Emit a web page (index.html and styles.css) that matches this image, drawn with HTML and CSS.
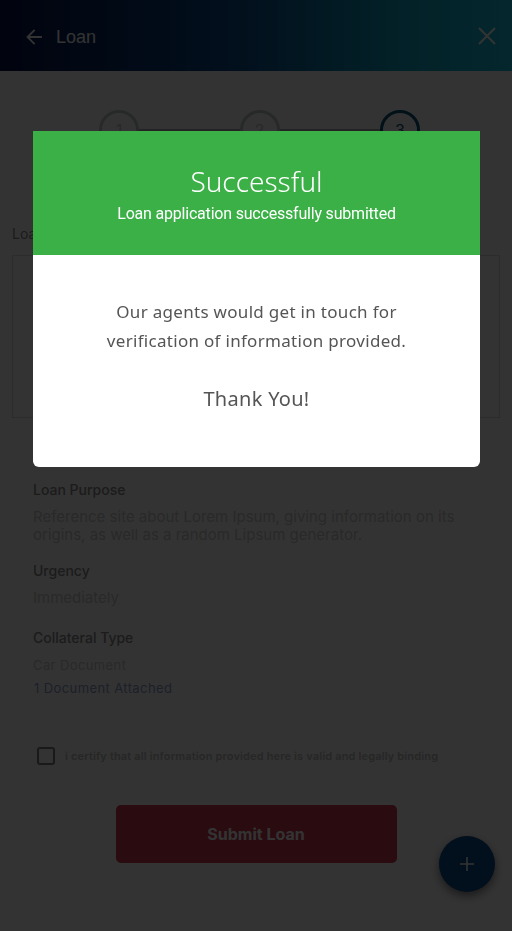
FILE: index.html
```html
<!DOCTYPE html>
<html lang="en">
<head>
<meta charset="utf-8">
<title>Loan</title>
<link rel="stylesheet" href="styles.css">
</head>
<body>
<div class="app">
  <header class="topbar">
    <svg class="icon-back" viewBox="0 0 16 16" width="16" height="16" aria-hidden="true">
      <path d="M15 8H2 M8 1.5 1.5 8 8 14.5" fill="none" stroke="#fff" stroke-width="1.8" stroke-linecap="square"/>
    </svg>
    <span class="title">Loan</span>
    <svg class="icon-close" viewBox="0 0 18 18" width="18" height="18" aria-hidden="true">
      <path d="M1 1 17 17 M17 1 1 17" fill="none" stroke="#fff" stroke-width="2"/>
    </svg>
  </header>

  <div class="stepper">
    <span class="circle done">1</span>
    <span class="step-line"></span>
    <span class="circle done">2</span>
    <span class="step-line"></span>
    <span class="circle active">3</span>
  </div>

  <div class="section-title">Loan Summary</div>
  <div class="summary-box">
    <div class="sum-row"><span>Amount</span><span>₦500,000</span></div>
    <div class="sum-row"><span>Tenure</span><span>6 Months</span></div>
    <div class="sum-row"><span>Rate</span><span>5%</span></div>
    <div class="sum-row"><span>Monthly</span><span>₦87,500</span></div>
  </div>

  <div class="details">
    <div class="field">
      <div class="label">Loan Purpose</div>
      <div class="value">Reference site about Lorem Ipsum, giving information on its origins, as well as a random Lipsum generator.</div>
    </div>
    <div class="field">
      <div class="label">Urgency</div>
      <div class="value">Immediately</div>
    </div>
    <div class="field collateral">
      <div class="label">Collateral Type</div>
      <div class="value small">Car Document</div>
      <div class="value small link">1 Document Attached</div>
    </div>
  </div>

  <label class="certify">
    <span class="checkbox"></span>
    <span class="certify-text">i certify that all information provided here is valid and legally binding</span>
  </label>

  <div class="actions">
    <button class="submit" type="button">Submit Loan</button>
  </div>

  <button class="fab" type="button" aria-label="Add">
    <svg viewBox="0 0 16 16" width="16" height="16" aria-hidden="true">
      <path d="M8 1V15 M1 8H15" fill="none" stroke="#fff" stroke-width="1.6"/>
    </svg>
  </button>
</div>

<div class="overlay">
  <div class="modal">
    <div class="modal-head">
      <div class="modal-title">Successful</div>
      <div class="modal-sub">Loan application successfully submitted</div>
    </div>
    <div class="modal-body">
      <p class="modal-msg">Our agents would get in touch for<br>verification of information provided.</p>
      <p class="modal-thanks">Thank You!</p>
    </div>
  </div>
</div>
</body>
</html>
```

FILE: styles.css
```css
* { box-sizing: border-box; }

html, body {
  margin: 0;
  padding: 0;
  width: 512px;
  height: 931px;
  overflow: hidden;
  background: #ffffff;
  font-family: "Inter", "Noto Sans", sans-serif;
}

.app {
  position: relative;
  width: 512px;
  height: 931px;
  display: flex;
  flex-direction: column;
}

.topbar {
  height: 71px;
  flex: none;
  display: flex;
  align-items: center;
  padding: 0 16px 0 26px;
  background: linear-gradient(90deg, #06134a 0%, #0a4a8a 45%, #10a8c8 80%, #14c0dc 100%);
  color: #fff;
}

.icon-back { display: block; margin-top: 2px; }

.title {
  margin-left: 14px;
  font-family: "Liberation Sans", sans-serif;
  font-size: 18px;
  line-height: 22px;
  margin-top: 2px;
  flex: 1;
}

.icon-close { display: block; }

.stepper {
  margin: 39px 0 0 99px;
  width: 321px;
  display: flex;
  align-items: center;
}

.circle {
  width: 40px;
  height: 40px;
  flex: none;
  border-radius: 50%;
  border: 3px solid #c4cbcb;
  display: flex;
  align-items: center;
  justify-content: center;
  font-size: 16px;
  color: #c8c8c8;
}

.circle.active {
  border-color: #0a5078;
  color: #0a5078;
}

.step-line {
  flex: 1;
  height: 3px;
  background: #b0b0b0;
}

.section-title {
  margin: 75px 0 0 12px;
  font-size: 14px;
  line-height: 18px;
  color: #8c8c8c;
}

.summary-box {
  margin: 12px 12px 0 12px;
  height: 163px;
  border: 1px solid #dcdcdc;
  padding: 18px 19px 0 30px;
  display: flex;
  flex-direction: column;
  gap: 17px;
}

.sum-row {
  display: flex;
  justify-content: space-between;
  font-size: 14px;
  line-height: 18px;
  color: #a0a0a0;
}

.details {
  margin-top: 63px;
  padding: 0 33px;
  display: flex;
  flex-direction: column;
  gap: 18px;
}

.field { display: flex; flex-direction: column; }

.field.collateral { margin-top: 4px; }

.label {
  font-size: 14px;
  line-height: 18px;
  font-weight: 500;
  color: #8a8a8a;
}

.value {
  margin-top: 9px;
  font-size: 15px;
  line-height: 18px;
  color: #cbcbcb;
}

.value.small {
  font-size: 13px;
  letter-spacing: 0.4px;
  margin-top: 9px;
}

.value.small.link {
  margin-top: 5px;
  padding-left: 1px;
  color: #8aa0c8;
}

.certify {
  margin: 50px 0 0 37px;
  display: flex;
  align-items: center;
  gap: 10px;
}

.checkbox {
  width: 18px;
  height: 18px;
  border: 2px solid #7d7d7d;
  border-radius: 3px;
  flex: none;
}

.certify-text {
  font-size: 11px;
  font-weight: 600;
  letter-spacing: 0.15px;
  color: #bdbdbd;
}

.actions {
  margin-top: 40px;
  display: flex;
  justify-content: center;
}

.submit {
  width: 281px;
  height: 58px;
  border: none;
  border-radius: 5px;
  background: #cd3750;
  color: #fff;
  font-family: "Inter", sans-serif;
  font-size: 16px;
  font-weight: 700;
}

.fab {
  position: absolute;
  left: 439px;
  top: 836px;
  width: 56px;
  height: 56px;
  border-radius: 50%;
  border: none;
  background: #0a4a8a;
  box-shadow: 0 4px 10px rgba(0,0,0,0.5);
  display: flex;
  align-items: center;
  justify-content: center;
  padding: 0;
}

.overlay {
  position: fixed;
  inset: 0;
  background: rgba(0,0,0,0.8);
  padding: 131px 32px 0 33px;
}

.modal {
  width: 447px;
  background: #fff;
  border-radius: 0 0 6px 6px;
  overflow: hidden;
}

.modal-head {
  height: 124px;
  background: #3bb046;
  color: #fff;
  text-align: center;
  padding-top: 33px;
}

.modal-title {
  font-family: "Noto Sans", sans-serif;
  font-size: 28px;
  line-height: 34px;
  font-weight: 300;
}

.modal-sub {
  font-family: "Roboto", sans-serif;
  font-size: 16px;
  line-height: 20px;
  letter-spacing: -0.2px;
  margin-top: 6px;
}

.modal-body {
  height: 212px;
  text-align: center;
  padding-top: 42px;
  color: #555;
}

.modal-msg {
  margin: 0;
  font-family: "Noto Sans", sans-serif;
  font-size: 17px;
  line-height: 29px;
  letter-spacing: 0.3px;
}

.modal-thanks {
  margin: 30px 0 0;
  font-family: "Noto Sans", sans-serif;
  font-size: 20px;
  line-height: 28px;
  letter-spacing: 0.3px;
}
```
